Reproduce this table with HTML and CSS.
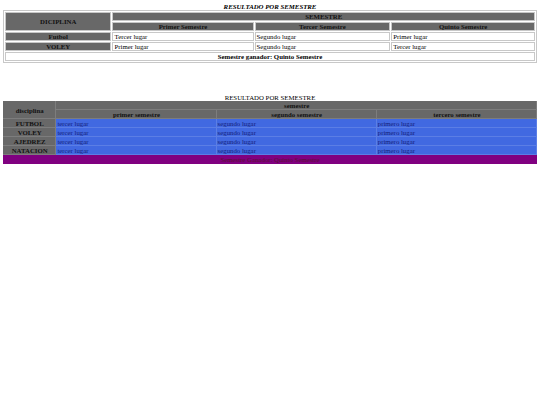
FILE: index.html
```html
<!DOCTYPE html>
<html>
<head>
<meta charset="utf-8">
<link rel="stylesheet" href="styles.css">
</head>
<body>
<table class="t1">
  <caption class="cap1">RESULTADO POR SEMESTRE</caption>
  <tr>
    <th rowspan="2" class="c1">DICIPLINA</th>
    <th colspan="3">SEMESTRE</th>
  </tr>
  <tr>
    <th class="c2">Primer Semestre</th>
    <th class="c3">Tercer Semestre</th>
    <th class="c4">Quinto Semestre</th>
  </tr>
  <tr>
    <th>Futbol</th>
    <td>Tercer lugar</td>
    <td>Segundo lugar</td>
    <td>Primer lugar</td>
  </tr>
  <tr>
    <th>VOLEY</th>
    <td>Primer lugar</td>
    <td>Segundo lugar</td>
    <td>Tercer lugar</td>
  </tr>
  <tr>
    <th colspan="4" class="win">Semestre ganador: Quinto Semestre</th>
  </tr>
</table>

<table class="t2">
  <caption class="cap2">RESULTADO POR SEMESTRE</caption>
  <tr>
    <th rowspan="2" class="d1">disciplina</th>
    <th colspan="3">semestre</th>
  </tr>
  <tr>
    <th class="d2">primer semestre</th>
    <th class="d3">segundo semestre</th>
    <th class="d4">tercero semestre</th>
  </tr>
  <tr><th>FUTBOL</th><td>tercer lugar</td><td>segundo lugar</td><td>primero lugar</td></tr>
  <tr><th>VOLEY</th><td>tercer lugar</td><td>segundo lugar</td><td>primero lugar</td></tr>
  <tr><th>AJEDREZ</th><td>tercer lugar</td><td>segundo lugar</td><td>primero lugar</td></tr>
  <tr><th>NATACION</th><td>tercer lugar</td><td>segundo lugar</td><td>primero lugar</td></tr>
  <tr><td colspan="4" class="win2">Semestre Ganador: Quinto Semestre</td></tr>
</table>
</body>
</html>
```

FILE: styles.css
```css
html, body {
  margin: 0;
  padding: 0;
  background: #fff;
}
body {
  padding: 3px;
  font-family: "Liberation Serif", "Times New Roman", serif;
  font-size: 6.8px;
  color: #000;
}
table {
  width: 100%;
  font-size: 6.8px;
}
caption {
  line-height: 7px;
}
.cap1 {
  font-weight: bold;
  font-style: italic;
}
.t1 {
  border: 1px solid #c8c8c8;
  border-spacing: 1px;
}
.t1 th, .t1 td {
  border: 1px solid #c8c8c8;
  padding: 0 1px;
  height: 7px;
  line-height: 7px;
  text-align: left;
}
.t1 th {
  background: #686868;
  color: #111;
  text-align: center;
}
.t1 td {
  background: #fff;
}
.t1 th.win {
  background: #fff;
  color: #000;
}
.c1 { width: 20%; }
.c2 { width: 26.5%; }
.c3 { width: 25.5%; }
.c4 { width: 27%; }

.t2 {
  margin-top: 31px;
  border-spacing: 0;
}
.t2 th, .t2 td {
  padding: 0 1px;
  height: 9px;
  line-height: 9px;
  border: 0;
  box-shadow: inset -1px -1px 0 rgba(255, 255, 255, 0.14);
}
.t2 th {
  background: #686868;
  color: #111;
}
.t2 td {
  background: #4169e1;
  color: #14207a;
  text-align: left;
}
.t2 td.win2 {
  background: #800080;
  color: #5a1030;
  text-align: center;
  box-shadow: none;
}
.d1 { width: 10%; }
.d2 { width: 30%; }
.d3 { width: 30%; }
.d4 { width: 30%; }
```
